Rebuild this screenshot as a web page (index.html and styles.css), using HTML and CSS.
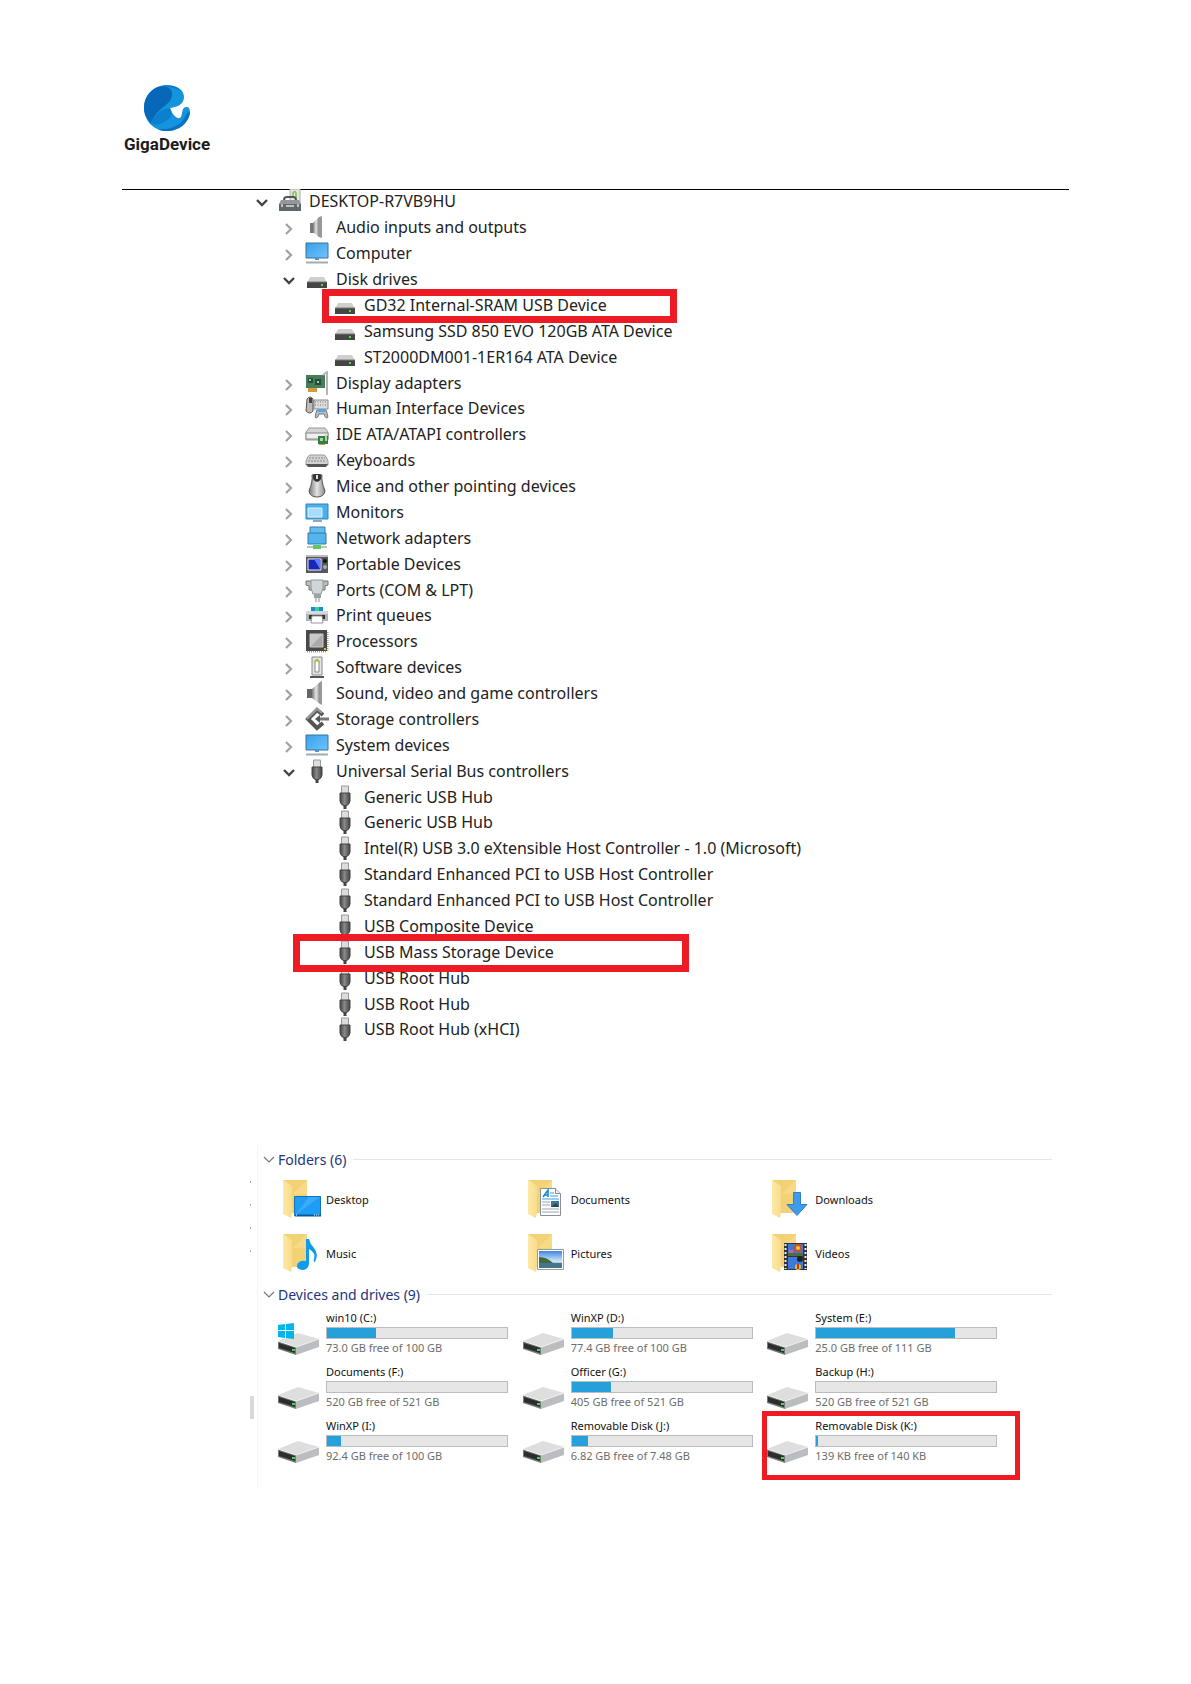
FILE: index.html
```html
<!DOCTYPE html>
<html lang="en">
<head>
    <meta charset="UTF-8">
    <meta name="viewport" content="width=device-width, initial-scale=1.0">
    <title>GigaDevice</title>
    <link rel="stylesheet" href="styles.css">
</head>
<body>
    <!-- Icon library -->
    <svg class="defs" width="0" height="0" aria-hidden="true">
        <defs>
            <linearGradient id="g-metal" x1="0" y1="0" x2="1" y2="0"><stop offset="0" stop-color="#777"/><stop offset=".5" stop-color="#e4e4e4"/><stop offset="1" stop-color="#888"/></linearGradient>
            <linearGradient id="g-blue" x1="0" y1="0" x2="1" y2="1"><stop offset="0" stop-color="#3aa0e8"/><stop offset="1" stop-color="#6cc4fb"/></linearGradient>
            <linearGradient id="g-plug" x1="0" y1="0" x2="1" y2="0"><stop offset="0" stop-color="#444"/><stop offset=".45" stop-color="#888"/><stop offset="1" stop-color="#444"/></linearGradient>
            <linearGradient id="g-flap" x1="0" y1="0" x2="1" y2="0"><stop offset="0" stop-color="#fde9a6"/><stop offset="1" stop-color="#f8dc8a"/></linearGradient>
            <linearGradient id="g-sky" x1="0" y1="0" x2="0" y2="1"><stop offset="0" stop-color="#3f86e0"/><stop offset=".6" stop-color="#cfe6f8"/><stop offset="1" stop-color="#3b6c8c"/></linearGradient>
        </defs>
        <symbol id="i-open" viewBox="0 0 20 24"><path d="M5 11l5 5 5-5" fill="none" stroke="#444" stroke-width="2.4"/></symbol>
        <symbol id="i-closed" viewBox="0 0 20 24"><path d="M7 9l5 5-5 5" fill="none" stroke="#a2a2a2" stroke-width="2.2"/></symbol>
        <symbol id="i-root" viewBox="0 0 24 24">
            <path d="M12 0h10v18H12z" fill="#e6e6e6" stroke="#aaa"/><path d="M15 8V4q2-3 3 0v5" fill="none" stroke="#7cc24a" stroke-width="1.6"/>
            <path d="M6 11q0-3 3-3h6q3 0 3 3" fill="none" stroke="#555" stroke-width="2"/><path d="M3 11h18l2 4v7H1v-7z" fill="#929899"/><path d="M1 15h22v7H1z" fill="#626869"/><path d="M4 15v3M20 15v3M8 17h8" stroke="#ddd" stroke-width="1.5"/>
        </symbol>
        <symbol id="i-speaker" viewBox="0 0 24 24"><path d="M2 8h6v9H2z" fill="#666"/><path d="M7 8l8-7v22l-8-6z" fill="url(#g-metal)"/><path d="M15 1l2-1v24l-2-1z" fill="#999"/></symbol>
        <symbol id="i-audio" viewBox="0 0 24 24"><path d="M5 8h4v10H5z" fill="#777"/><path d="M8 8l6-6v20l-6-5z" fill="url(#g-metal)"/><path d="M14 2l3-1v22l-3-1z" fill="#999"/></symbol>
        <symbol id="i-computer" viewBox="0 0 24 24"><path d="M1 2h22v15H1z" fill="url(#g-blue)" stroke="#39729b"/><path d="M10 17h4v2h-4z" fill="#5793bd"/><path d="M1 21.500h22" stroke="#9fadb7" stroke-width="2"/></symbol>
        <symbol id="i-disk" viewBox="0 0 24 24"><path d="M5 10h14l3 6H2z" fill="#cfcfcf"/><path d="M2 15h20v6H2z" fill="#454545"/><path d="M2 15h20" stroke="#777"/><path d="M16 17h2v2h-2z" fill="#35e83a"/></symbol>
        <symbol id="i-display" viewBox="0 0 24 24"><path d="M1 4h19v13H1z" fill="#487d5c"/><path d="M3 7h5v5H3zM10 8h6v6h-6z" fill="#264d39"/><path d="M4 8h2v2H4zM12 10h2v2h-2z" fill="#9ec9aa"/><path d="M3 17h9v4H3z" fill="#d49a3e"/><path d="M18 4l4-3v23" fill="none" stroke="#b5b5b5" stroke-width="2"/></symbol>
        <symbol id="i-hid" viewBox="0 0 24 24"><path d="M9 4h14v9H9z" fill="#ddd" stroke="#888"/><path d="M10 6h12M10 9h12" stroke="#777" stroke-dasharray="1 1.500"/><path d="M2 3q3-4 6 0v12q-3 4-7 0z" fill="#bbb" stroke="#555"/><path d="M4 2h3v5H4z" fill="#444"/><path d="M11 22q-2 0 1-8h9q3 8 1 8-2 0-3-4h-5q-1 4-3 4z" fill="#bbb" stroke="#777"/><path d="M13 13h7v3h-7z" fill="#53a7e3"/></symbol>
        <symbol id="i-ide" viewBox="0 0 24 24"><path d="M4 6h16l3 4v8H1v-8z" fill="#d4d4d4" stroke="#999"/><path d="M1 11h22v6H1z" fill="#efefef" stroke="#888"/><path d="M13 14h10v8H13z" fill="#397d46"/><path d="M15 16h3v3h-3zM20 13h2v6h-2z" fill="#a6d8a5"/><path d="M14 22h6v1h-6z" fill="#c99a35"/></symbol>
        <symbol id="i-keyboard" viewBox="0 0 24 24"><path d="M5 7h14q2 0 4 6v4H1v-4q2-6 4-6z" fill="#d2d2d2" stroke="#999"/><path d="M4 10h16M3 13h18" stroke="#888" stroke-dasharray="2 1"/><path d="M1 16h22l-2 3H3z" fill="#555"/></symbol>
        <symbol id="i-mouse" viewBox="0 0 24 24"><path d="M7 1q5-2 10 0-1 6 3 16-1 6-8 6t-8-6q4-10 3-16z" fill="url(#g-metal)" stroke="#555"/><path d="M8 1q4-2 8 0v4q-4 6-8 0z" fill="#333"/><path d="M11 1h2v4h-2z" fill="#ddd"/></symbol>
        <symbol id="i-monitor" viewBox="0 0 24 24"><path d="M1 4h22v15H1z" fill="#48b0ed" stroke="#3185b8"/><path d="M3 8h14v9H3z" fill="#a9dcfa" stroke="#d8f1ff"/><path d="M8 21h9" stroke="#92a7b5" stroke-width="2"/></symbol>
        <symbol id="i-network" viewBox="0 0 24 24"><path d="M5 1h15v10H5z" fill="#63bef0" stroke="#347ba8"/><path d="M3 7h18v11H3z" fill="#55b4ec" stroke="#347ba8"/><path d="M2 21h20" stroke="#b5c9b8" stroke-width="2"/><path d="M8 19h8v4H8z" fill="#55cf64"/></symbol>
        <symbol id="i-portable" viewBox="0 0 24 24"><path d="M1 3h22v18H1z" fill="#54595f"/><path d="M1 3h22v2H1z" fill="#bbb"/><path d="M3 7h13v11H3z" fill="#1728b8" stroke="#eee"/><path d="M9 7h6v10z" fill="#647cff"/><circle cx="20" cy="9" r="2" fill="#111"/><circle cx="20" cy="15" r="2" fill="#aaa"/></symbol>
        <symbol id="i-port" viewBox="0 0 24 24"><path d="M1 3h22v4l-3 1v4H4V8L1 7z" fill="#b7bec2" stroke="#777"/><path d="M6 2h12v8l-2 6H8L6 10z" fill="#d0d5d7" stroke="#899"/><path d="M9 16h7v4H9z" fill="#9aa2a6"/><path d="M11 20v4M14 20v4" stroke="#889"/></symbol>
        <symbol id="i-print" viewBox="0 0 24 24"><path d="M6 4h12v5H6z" fill="#168ed1"/><path d="M10 4h4v4h-4z" fill="#35d19d"/><path d="M1 8h22v10H1z" fill="#aeb5ba"/><path d="M1 8h22v3H1z" fill="#d6dadd"/><path d="M4 12h16v4H4z" fill="#333"/><path d="M7 13h10l1 7H6z" fill="#fff" stroke="#999"/></symbol>
        <symbol id="i-cpu" viewBox="0 0 24 24"><path d="M2 22.500h20M22.500 3v19" stroke="#b9a34b" stroke-width="2" stroke-dasharray="1 1"/><path d="M1 1h21v21H1z" fill="#494949"/><path d="M5 5h13v13H5z" fill="#aaa" stroke="#ccc"/><path d="M5 5h13L5 18z" fill="#c8c8c8"/><path d="M19 19h2v2h-2z" fill="#e1b92e"/></symbol>
        <symbol id="i-software" viewBox="0 0 24 24"><path d="M7 2h10v18H7z" fill="#e4e4e4" stroke="#888"/><path d="M10 17V6q2-3 4 0v11z" fill="#fff" stroke="#888"/><path d="M10 7q2-4 4 0" fill="none" stroke="#9ac41e" stroke-width="2"/><path d="M5 22h14" stroke="#555" stroke-width="2"/></symbol>
        <symbol id="i-storage" viewBox="0 0 24 24"><path d="M18 8l-6-5-9 9 9 9 6-5" fill="none" stroke="#555" stroke-width="4"/><path d="M17 6l-5-4-10 10" fill="none" stroke="#999" stroke-width="2"/><path d="M13 12h11" stroke="#777" stroke-width="3"/><path d="M15 8v8l-5-4z" fill="#555"/></symbol>
        <symbol id="i-usb" viewBox="0 0 24 24"><path d="M8.500 1h7v8h-7z" fill="#ddd" stroke="#999"/><path d="M7 8h10v8q0 3-4 5h-2q-4-2-4-5z" fill="url(#g-plug)" stroke="#444"/><path d="M10.500 20h3v4h-3z" fill="#444"/></symbol>

        <symbol id="i-chevron" viewBox="0 0 12 12"><path d="M1 4l5 5 5-5" fill="none" stroke="#777" stroke-width="1.200"/></symbol>
        <symbol id="i-folder" viewBox="0 0 42 40"><path d="M0 1h24v33H6z" fill="#f3d277"/><path d="M24 1v14H10z" fill="#f7da87"/><path d="M0 1l9 6v26l-1 6-8-4z" fill="url(#g-flap)"/></symbol>
        <symbol id="i-desktop" viewBox="0 0 42 40"><use href="#i-folder"/><path d="M11.500 17.500h26v19h-26z" fill="#1e9df5" stroke="#1272b8"/><path d="M12 36l14-18h11z" fill="#3aabfa"/><path d="M12 36.500h26" stroke="#075a9a" stroke-width="2"/><path d="M13 36h1M31 36h5" stroke="#fff" stroke-dasharray="1 1"/></symbol>
        <symbol id="i-documents" viewBox="0 0 42 40"><use href="#i-folder"/><path d="M12.500 9.500h15l5 5v22h-20z" fill="#fff" stroke="#8a8f94"/><path d="M27.500 9.500v5h5" fill="#eee" stroke="#8a8f94"/><path d="M15 18l5-7v7M17 16h3" fill="none" stroke="#1687d0" stroke-width="1.500"/><path d="M22 14h4M22 17h8M14 20h17" stroke="#3aa0df"/><path d="M14 23h8M14 26h8M14 30h17M14 33h17" stroke="#9aa5ac"/><path d="M23 22h8v6h-8z" fill="#3d74a8"/><path d="M23 28l5-4 3 4z" fill="#294b40"/></symbol>
        <symbol id="i-downloads" viewBox="0 0 42 40"><use href="#i-folder"/><path d="M21.500 13.500h7v12h6.500l-10 11-10-11h6.500z" fill="#3f9cea" stroke="#2b82cb"/></symbol>
        <symbol id="i-music" viewBox="0 0 42 40"><use href="#i-folder"/><path d="M23 6h3q1 5 5 9 5 6 1 14-2 0-1-3 2-6-5-10v15q-1 6-7 6-6-1-5-5 2-5 9-4z" fill="#109bec"/></symbol>
        <symbol id="i-pictures" viewBox="0 0 42 40"><use href="#i-folder"/><path d="M9.500 16.500h26v20h-26z" fill="#fff" stroke="#999"/><path d="M11 18h23v17H11z" fill="url(#g-sky)"/><path d="M11 24q8 0 14 6H11z" fill="#42683f"/><path d="M11 30h23v5H11z" fill="#49758c"/></symbol>
        <symbol id="i-videos" viewBox="0 0 42 40"><use href="#i-folder"/><path d="M12 10h23v27H12z" fill="#333"/><path d="M16 11h15v12H16zM16 24h15v12H16z" fill="#3c79d8"/><path d="M13.500 11v25M33.500 11v25" stroke="#eee" stroke-width="2" stroke-dasharray="2 2"/><circle cx="26" cy="15" r="4" fill="#d64c22"/><circle cx="26" cy="15" r="2" fill="#f5cb2c"/><path d="M16 20h15v3H16z" fill="#4a713c"/><path d="M17 17h4v3h-4z" fill="#d45bb0"/><circle cx="28" cy="26" r="3" fill="#222"/><circle cx="26" cy="34" r="3" fill="#f1bd25"/><path d="M25 31h2v5h-2z" fill="#c2331d"/></symbol>
        <symbol id="i-drive" viewBox="0 0 42 34"><path d="M0 18L20 10l21 6-22 10z" fill="#dedede"/><path d="M0 18l18 6v8L0 26z" fill="#77797b"/><path d="M1 20l16 5v5L1 25z" fill="#2b2d2e"/><path d="M18 24l23-8v8l-23 8z" fill="#bcbdc0"/><path d="M0 18l18 6 23-8" fill="none" stroke="#f1f1f1"/><path d="M14 26h3v2h-3z" fill="#3be04b"/></symbol>
        <symbol id="i-windrive" viewBox="0 0 42 34"><use href="#i-drive"/><path d="M0 2l7-1v6H0zM8 1l8-1v7H8zM0 8h7v7l-7-1zM8 8h8v8l-8-1z" fill="#00b4ee"/></symbol>
    </svg>

    <header class="page-header">
        <div class="logo">
            <svg class="logo-mark" viewBox="0 0 46 46" aria-hidden="true">
                <path d="M23 0C33 0 40 5 40 12c0 7-6 10-14 11 2 6 6 11 10 10 3-2 1-11 6-11 3 0 4 2 4 5-1 11-11 19-23 19C10 46 0 36 0 23S10 0 23 0z" fill="#1394dc"/>
                <path d="M19 1c8 1 11 6 8 13-3 7-14 9-20 24C3 34 0 29 0 23 0 11 8 2 19 1z" fill="#0867b9"/>
                <path d="M19 1c2-1 16-1 20 7-5-5-12-5-20-7z" fill="#0b7fcc"/>
                <path d="M26 23c-8 1-14 5-19 15 4 3 8 2 13-1 5-2 7-5 8-9z" fill="#0b80cd"/>
                <path d="M46 27c-1 11-11 19-23 19-4 0-6 0-9-2 14 1 24-4 29-16z" fill="#0a72c4"/>
            </svg>
            <span class="logo-name">GigaDevice</span>
        </div>
    </header>

    <main>
        <ul class="tree">
            <li class="row"><svg class="arrow"><use href="#i-open"/></svg><svg class="icon"><use href="#i-root"/></svg>DESKTOP-R7VB9HU</li>
            <li class="row level-1"><svg class="arrow"><use href="#i-closed"/></svg><svg class="icon"><use href="#i-audio"/></svg>Audio inputs and outputs</li>
            <li class="row level-1"><svg class="arrow"><use href="#i-closed"/></svg><svg class="icon"><use href="#i-computer"/></svg>Computer</li>
            <li class="row level-1"><svg class="arrow"><use href="#i-open"/></svg><svg class="icon"><use href="#i-disk"/></svg>Disk drives</li>
            <li class="row level-2 marked marked-disk"><svg class="icon"><use href="#i-disk"/></svg>GD32 Internal-SRAM USB Device</li>
            <li class="row level-2"><svg class="icon"><use href="#i-disk"/></svg>Samsung SSD 850 EVO 120GB ATA Device</li>
            <li class="row level-2"><svg class="icon"><use href="#i-disk"/></svg>ST2000DM001-1ER164 ATA Device</li>
            <li class="row level-1"><svg class="arrow"><use href="#i-closed"/></svg><svg class="icon"><use href="#i-display"/></svg>Display adapters</li>
            <li class="row level-1"><svg class="arrow"><use href="#i-closed"/></svg><svg class="icon"><use href="#i-hid"/></svg>Human Interface Devices</li>
            <li class="row level-1"><svg class="arrow"><use href="#i-closed"/></svg><svg class="icon"><use href="#i-ide"/></svg>IDE ATA/ATAPI controllers</li>
            <li class="row level-1"><svg class="arrow"><use href="#i-closed"/></svg><svg class="icon"><use href="#i-keyboard"/></svg>Keyboards</li>
            <li class="row level-1"><svg class="arrow"><use href="#i-closed"/></svg><svg class="icon"><use href="#i-mouse"/></svg>Mice and other pointing devices</li>
            <li class="row level-1"><svg class="arrow"><use href="#i-closed"/></svg><svg class="icon"><use href="#i-monitor"/></svg>Monitors</li>
            <li class="row level-1"><svg class="arrow"><use href="#i-closed"/></svg><svg class="icon"><use href="#i-network"/></svg>Network adapters</li>
            <li class="row level-1"><svg class="arrow"><use href="#i-closed"/></svg><svg class="icon"><use href="#i-portable"/></svg>Portable Devices</li>
            <li class="row level-1"><svg class="arrow"><use href="#i-closed"/></svg><svg class="icon"><use href="#i-port"/></svg>Ports (COM &amp; LPT)</li>
            <li class="row level-1"><svg class="arrow"><use href="#i-closed"/></svg><svg class="icon"><use href="#i-print"/></svg>Print queues</li>
            <li class="row level-1"><svg class="arrow"><use href="#i-closed"/></svg><svg class="icon"><use href="#i-cpu"/></svg>Processors</li>
            <li class="row level-1"><svg class="arrow"><use href="#i-closed"/></svg><svg class="icon"><use href="#i-software"/></svg>Software devices</li>
            <li class="row level-1"><svg class="arrow"><use href="#i-closed"/></svg><svg class="icon"><use href="#i-speaker"/></svg>Sound, video and game controllers</li>
            <li class="row level-1"><svg class="arrow"><use href="#i-closed"/></svg><svg class="icon"><use href="#i-storage"/></svg>Storage controllers</li>
            <li class="row level-1"><svg class="arrow"><use href="#i-closed"/></svg><svg class="icon"><use href="#i-computer"/></svg>System devices</li>
            <li class="row level-1"><svg class="arrow"><use href="#i-open"/></svg><svg class="icon"><use href="#i-usb"/></svg>Universal Serial Bus controllers</li>
            <li class="row level-2"><svg class="icon"><use href="#i-usb"/></svg>Generic USB Hub</li>
            <li class="row level-2"><svg class="icon"><use href="#i-usb"/></svg>Generic USB Hub</li>
            <li class="row level-2"><svg class="icon"><use href="#i-usb"/></svg>Intel(R) USB 3.0 eXtensible Host Controller - 1.0 (Microsoft)</li>
            <li class="row level-2"><svg class="icon"><use href="#i-usb"/></svg>Standard Enhanced PCI to USB Host Controller</li>
            <li class="row level-2"><svg class="icon"><use href="#i-usb"/></svg>Standard Enhanced PCI to USB Host Controller</li>
            <li class="row level-2"><svg class="icon"><use href="#i-usb"/></svg>USB Composite Device</li>
            <li class="row level-2 marked marked-usb"><svg class="icon"><use href="#i-usb"/></svg>USB Mass Storage Device</li>
            <li class="row level-2"><svg class="icon"><use href="#i-usb"/></svg>USB Root Hub</li>
            <li class="row level-2"><svg class="icon"><use href="#i-usb"/></svg>USB Root Hub</li>
            <li class="row level-2"><svg class="icon"><use href="#i-usb"/></svg>USB Root Hub (xHCI)</li>
        </ul>

        <div class="explorer">
            <div class="gutter">
                <i class="tick"></i><i class="tick"></i><i class="tick"></i><i class="tick"></i>
                <i class="thumb"></i>
            </div>
            <div class="content">
                <h2 class="group-title"><svg class="chevron"><use href="#i-chevron"/></svg>Folders (6)</h2>
                <div class="grid folders">
                    <div class="folder"><svg><use href="#i-desktop"/></svg>Desktop</div>
                    <div class="folder"><svg><use href="#i-documents"/></svg>Documents</div>
                    <div class="folder"><svg><use href="#i-downloads"/></svg>Downloads</div>
                    <div class="folder"><svg><use href="#i-music"/></svg>Music</div>
                    <div class="folder"><svg><use href="#i-pictures"/></svg>Pictures</div>
                    <div class="folder"><svg><use href="#i-videos"/></svg>Videos</div>
                </div>

                <h2 class="group-title"><svg class="chevron"><use href="#i-chevron"/></svg>Devices and drives (9)</h2>
                <div class="grid drives">
                    <div class="drive"><svg><use href="#i-windrive"/></svg><div class="info"><p>win10 (C:)</p><div class="bar"><div class="used" style="width: 27%"></div></div><p class="free">73.0 GB free of 100 GB</p></div></div>
                    <div class="drive"><svg><use href="#i-drive"/></svg><div class="info"><p>WinXP (D:)</p><div class="bar"><div class="used" style="width: 23%"></div></div><p class="free">77.4 GB free of 100 GB</p></div></div>
                    <div class="drive"><svg><use href="#i-drive"/></svg><div class="info"><p>System (E:)</p><div class="bar"><div class="used" style="width: 77%"></div></div><p class="free">25.0 GB free of 111 GB</p></div></div>
                    <div class="drive"><svg><use href="#i-drive"/></svg><div class="info"><p>Documents (F:)</p><div class="bar"><div class="used" style="width: 0%"></div></div><p class="free">520 GB free of 521 GB</p></div></div>
                    <div class="drive"><svg><use href="#i-drive"/></svg><div class="info"><p>Officer (G:)</p><div class="bar"><div class="used" style="width: 22%"></div></div><p class="free">405 GB free of 521 GB</p></div></div>
                    <div class="drive"><svg><use href="#i-drive"/></svg><div class="info"><p>Backup (H:)</p><div class="bar"><div class="used" style="width: 0%"></div></div><p class="free">520 GB free of 521 GB</p></div></div>
                    <div class="drive"><svg><use href="#i-drive"/></svg><div class="info"><p>WinXP (I:)</p><div class="bar"><div class="used" style="width: 8%"></div></div><p class="free">92.4 GB free of 100 GB</p></div></div>
                    <div class="drive"><svg><use href="#i-drive"/></svg><div class="info"><p>Removable Disk (J:)</p><div class="bar"><div class="used" style="width: 9%"></div></div><p class="free">6.82 GB free of 7.48 GB</p></div></div>
                    <div class="drive marked marked-drive"><svg><use href="#i-drive"/></svg><div class="info"><p>Removable Disk (K:)</p><div class="bar"><div class="used" style="width: 1%"></div></div><p class="free">139 KB free of 140 KB</p></div></div>
                </div>
            </div>
        </div>
    </main>
</body>
</html>
```
FILE: styles.css
```css
*, *::before, *::after {
    box-sizing: border-box;
}
body {
    margin: 0;
    padding: 85px 122px;
    background: white;
    color: #222;
    font-family: "Noto Sans", "Open Sans", sans-serif;
}
ul, h2, p {
    margin: 0;
    padding: 0;
}
svg {
    flex: none;
}
.defs {
    position: absolute;
}

.page-header {
    height: 105px;
    padding-left: 2px;
    border-bottom: 1px solid #000;
}
.logo {
    display: inline-flex;
    flex-direction: column;
    align-items: center;
    gap: 3px;
}
.logo-mark {
    width: 46px;
    height: 46px;
}
.logo-name {
    color: #1b1b1b;
    font: 700 17px/20px Roboto, sans-serif;
}

/* Device tree */
.tree {
    margin: -2px 0 0 130px;
    list-style: none;
}
.row {
    position: relative;
    display: flex;
    align-items: center;
    height: 26px;
    font-size: 16px;
    line-height: 24px;
    white-space: nowrap;
}
.row:nth-child(8n) {
    height: 25px;
}
.level-1 {
    padding-left: 27px;
}
.level-2 {
    padding-left: 81px;
}
.arrow {
    width: 20px;
    height: 24px;
    margin-right: 6px;
}
.icon {
    width: 24px;
    height: 24px;
    margin-right: 7px;
}

/* Red frames */
.marked {
    position: relative;
}
.marked::after {
    content: "";
    position: absolute;
    z-index: 1;
    border: 7px solid #ed1c24;
}
.marked-disk::after {
    top: -3px;
    left: 70px;
    width: 355px;
    height: 34px;
}
.marked-usb::after {
    top: -5px;
    left: 41px;
    width: 396px;
    height: 38px;
}
.marked-drive::after {
    top: -6px;
    left: -5px;
    width: 258px;
    height: 69px;
    border-width: 5px;
}

/* Explorer */
.explorer {
    display: flex;
    margin: 101px 17px 0 128px;
}
.gutter {
    width: 7px;
    padding-top: 38px;
}
.tick {
    display: block;
    width: 1px;
    height: 2px;
    margin-bottom: 21px;
    background: #aaa;
}
.thumb {
    display: block;
    width: 4px;
    height: 23px;
    margin-top: 144px;
    background: #d9d9d9;
}
.content {
    flex: 1;
    padding: 5px 0 18px 5px;
    border-left: 1px solid #f6f6f6;
}
.group-title {
    display: flex;
    align-items: center;
    height: 22px;
    color: #22337f;
    font-size: 14px;
    font-weight: 400;
}
.group-title::after {
    content: "";
    flex: 1;
    height: 1px;
    margin-left: 7px;
    background: #e6e6e6;
}
.chevron {
    width: 12px;
    height: 12px;
    margin-right: 3px;
}
.grid {
    display: grid;
    grid-template-columns: repeat(3, 1fr);
    grid-auto-rows: 54px;
    padding: 0 40px 0 15px;
    color: #111;
    font-size: 11px;
}
.folders {
    margin-bottom: 3px;
    padding-top: 2px;
}
.folder {
    display: flex;
    align-items: center;
    padding-left: 5px;
}
.folder svg {
    width: 42px;
    height: 40px;
    margin-right: 1px;
}
.drives {
    padding-top: 4px;
}
.drive {
    display: flex;
}
.drive svg {
    width: 42px;
    height: 34px;
    margin: 14px 6px 0 0;
}
.info {
    flex: 1;
    max-width: 182px;
    line-height: 18px;
}
.info p {
    white-space: nowrap;
}
.bar {
    height: 12px;
    border: 1px solid #bcbcbc;
    background: #e6e6e6;
}
.used {
    height: 100%;
    background: #26a0da;
}
.info .free {
    color: #6d6d6d;
}
```
